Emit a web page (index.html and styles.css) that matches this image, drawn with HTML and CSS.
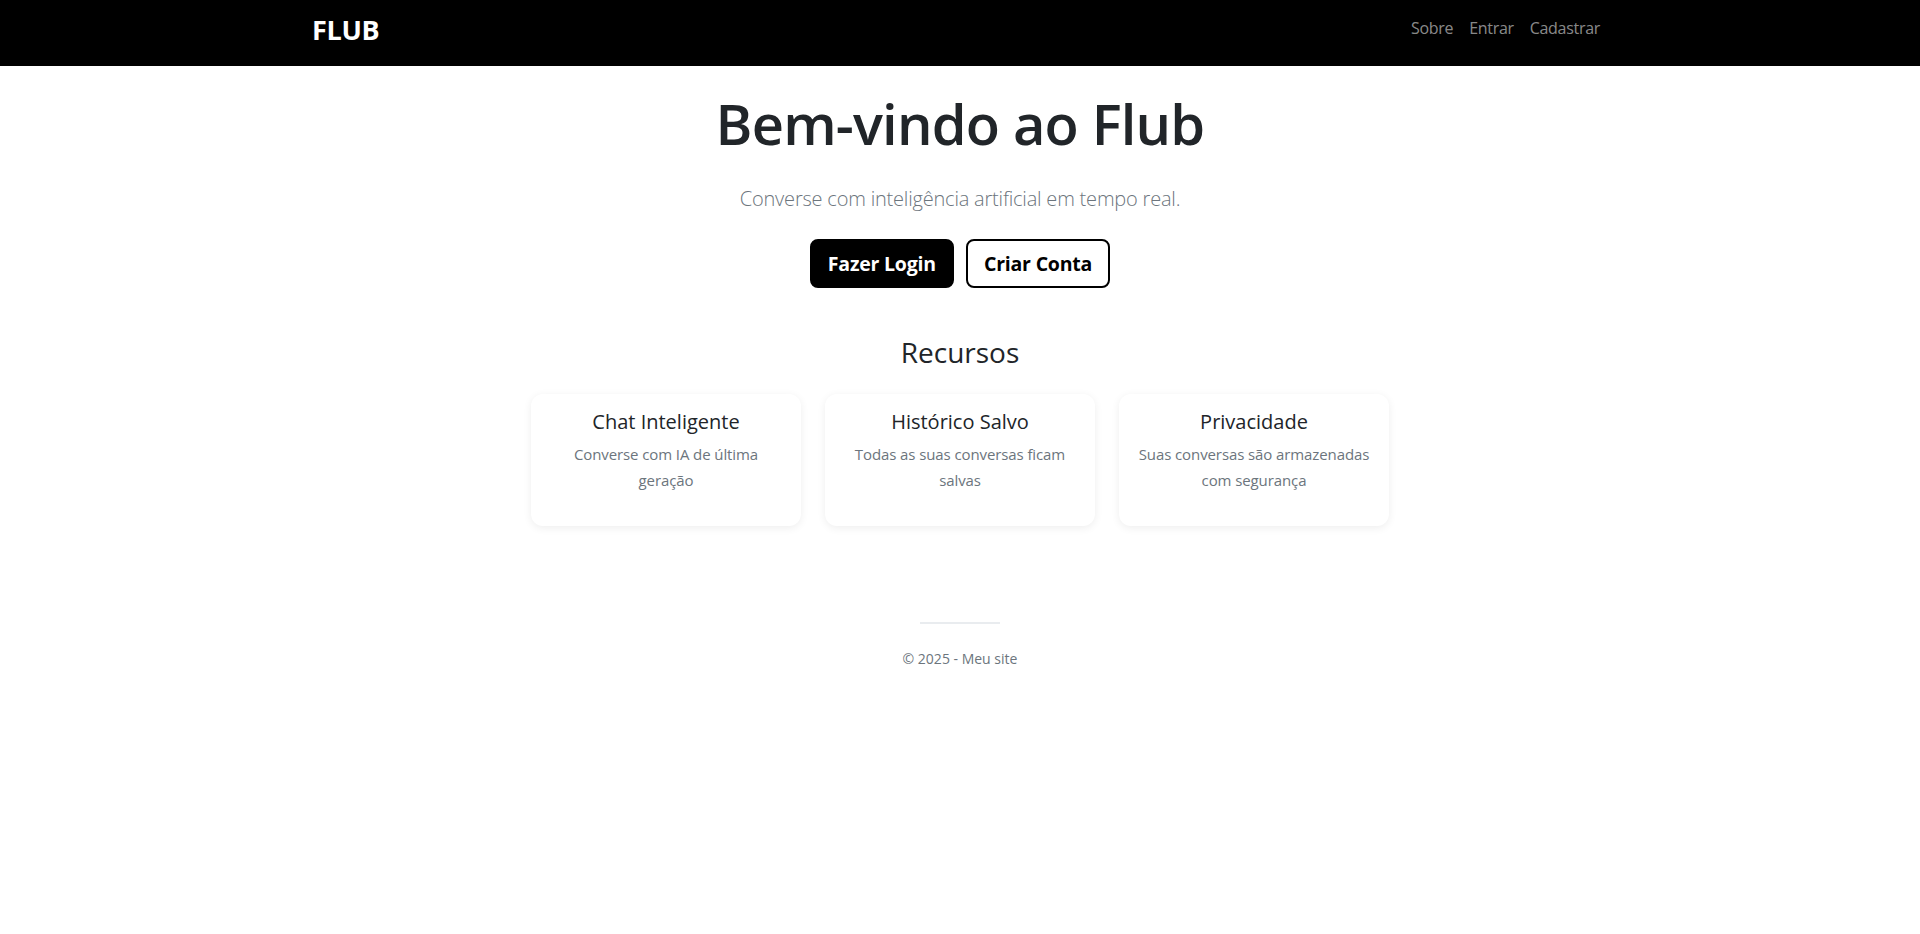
FILE: index.html
```html
<!DOCTYPE html>
<html lang="pt-BR">
<head>
<meta charset="utf-8">
<title>Flub</title>
<link rel="stylesheet" href="styles.css">
</head>
<body>
<nav class="navbar">
  <div class="container nav-inner">
    <a class="brand" href="#">FLUB</a>
    <ul class="nav-links">
      <li><a href="#">Sobre</a></li>
      <li><a href="#">Entrar</a></li>
      <li><a href="#">Cadastrar</a></li>
    </ul>
  </div>
</nav>
<main class="main">
  <section class="hero">
    <h1 class="hero-title">Bem-vindo ao Flub</h1>
    <p class="lead">Converse com inteligência artificial em tempo real.</p>
    <div class="actions">
      <a class="btn btn-dark" href="#">Fazer Login</a>
      <a class="btn btn-outline" href="#">Criar Conta</a>
    </div>
  </section>
  <section class="features">
    <h3 class="features-title">Recursos</h3>
    <div class="cards">
      <div class="card">
        <h5 class="card-title">Chat Inteligente</h5>
        <p class="card-text">Converse com IA de última geração</p>
      </div>
      <div class="card">
        <h5 class="card-title">Histórico Salvo</h5>
        <p class="card-text">Todas as suas conversas ficam salvas</p>
      </div>
      <div class="card">
        <h5 class="card-title">Privacidade</h5>
        <p class="card-text">Suas conversas são armazenadas com segurança</p>
      </div>
    </div>
  </section>
</main>
<footer class="footer">
  <hr class="footer-rule">
  <p class="footer-text">© 2025 - Meu site</p>
</footer>
</body>
</html>
```

FILE: styles.css
```css
* { box-sizing: border-box; }
body {
  margin: 0;
  font-family: "Open Sans", "Noto Sans", sans-serif;
  font-size: 16px;
  line-height: 1.6;
  color: #212529;
  background: #fff;
}
a { text-decoration: none; }
.container {
  max-width: 1320px;
  margin: 0 auto;
  padding: 0 12px;
}
.navbar {
  background: #000;
  height: 66px;
  display: flex;
  align-items: center;
  padding-bottom: 8px;
}
.nav-inner {
  width: 100%;
  display: flex;
  align-items: center;
  justify-content: space-between;
}
.brand {
  color: #fff;
  font-weight: 700;
  font-size: 27px;
  line-height: 1;
  letter-spacing: -0.3px;
}
.nav-links {
  list-style: none;
  margin: 0;
  padding: 0;
  display: flex;
}
.nav-links a {
  display: block;
  padding: 8px 8px;
  color: rgba(255,255,255,0.55);
  font-size: 16px;
  letter-spacing: -0.3px;
}
.main {
  padding-top: 24px;
}
.hero {
  text-align: center;
}
.hero-title {
  margin: 0 0 27px;
  font-size: 56px;
  line-height: 1.2;
  font-weight: 600;
  letter-spacing: -0.8px;
}
.lead {
  margin: 0 0 25px;
  font-size: 20px;
  font-weight: 300;
  line-height: 1.5;
  color: #6c757d;
  letter-spacing: -0.2px;
}
.actions {
  display: flex;
  justify-content: center;
  gap: 12px;
}
.btn {
  display: inline-block;
  padding: 8px 16px;
  font-size: 19.5px;
  font-weight: 700;
  line-height: 1.5;
  border-radius: 8px;
  border: 2px solid #000;
  letter-spacing: -0.2px;
}
.btn-dark {
  background: #000;
  color: #fff;
}
.btn-outline {
  background: #fff;
  color: #000;
}
.features {
  margin-top: 48px;
  text-align: center;
}
.features-title {
  margin: 0 0 24px;
  font-size: 28px;
  font-weight: 400;
  line-height: 1.2;
}
.cards {
  display: grid;
  grid-template-columns: repeat(3, 270px);
  gap: 24px;
  justify-content: center;
}
.card {
  background: #fff;
  border-radius: 12px;
  box-shadow: 0 2px 8px rgba(0,0,0,0.07);
  padding: 16px 14px;
}
.card-title {
  margin: 0 0 8px;
  font-size: 20px;
  font-weight: 400;
  line-height: 1.2;
}
.card-text {
  margin: 0 0 16px;
  color: #6c757d;
  font-size: 15px;
  line-height: 25.8px;
  letter-spacing: -0.1px;
}
.footer {
  margin-top: 96px;
  text-align: center;
}
.footer-rule {
  width: 80px;
  height: 2px;
  margin: 0 auto 24px;
  border: 0;
  background: #e9ecef;
}
.footer-text {
  margin: 0;
  font-size: 14px;
  font-weight: 500;
  color: #6c757d;
}
```
